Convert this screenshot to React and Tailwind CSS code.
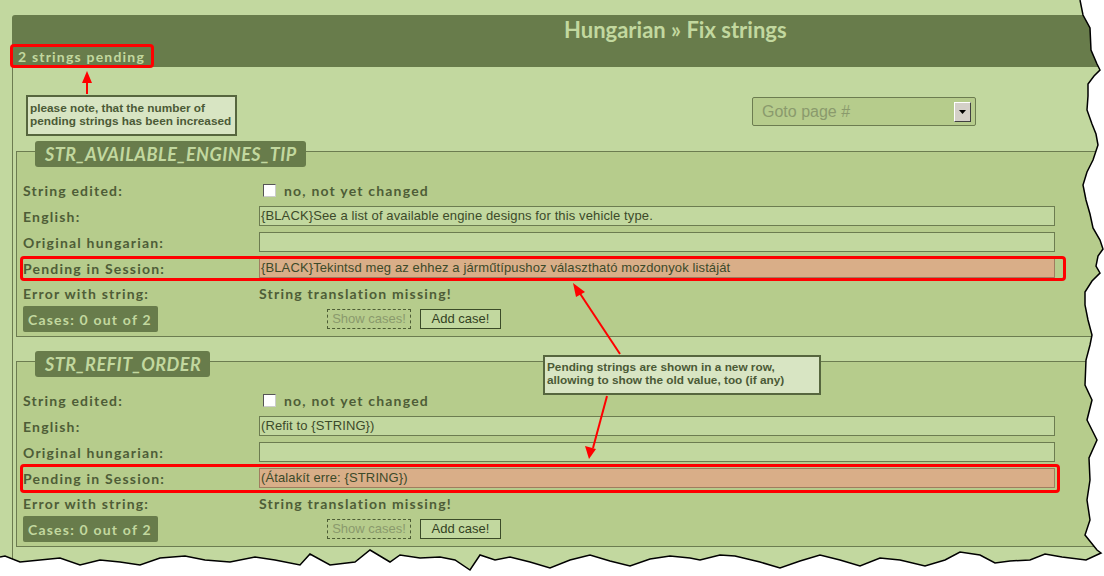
const EDGE = [
  [1080, 0], [1083, 15], [1090, 28], [1091, 50], [1097, 64], [1100, 70], [1094, 76], [1088, 84], [1088, 96],
  [1087, 110], [1092, 124], [1096, 134], [1098, 145], [1093, 160], [1087, 172], [1083, 185], [1086, 200],
  [1090, 214], [1093, 228], [1100, 240], [1103, 249], [1098, 256], [1096, 266], [1100, 273], [1092, 281],
  [1085, 292], [1085, 305], [1088, 320], [1092, 335], [1090, 345], [1086, 360], [1085, 385], [1092, 400],
  [1087, 420], [1097, 440], [1089, 458], [1090, 480], [1087, 500], [1090, 520], [1085, 535], [1097, 550],
  [1101, 553], [1086, 560], [1062, 557], [1045, 554], [1030, 560], [1010, 561], [995, 563], [980, 555],
  [960, 552], [945, 560], [925, 566], [900, 560], [880, 558], [860, 566], [840, 560], [820, 555], [800, 561],
  [780, 568], [760, 562], [735, 556], [720, 555], [700, 560], [690, 558], [670, 556], [650, 559], [630, 566],
  [610, 561], [590, 555], [570, 560], [550, 568], [530, 562], [510, 557], [495, 560], [480, 555], [470, 570],
  [455, 560], [440, 557], [420, 558], [400, 555], [390, 562], [370, 550], [355, 562], [330, 565], [310, 554],
  [300, 565], [275, 560], [255, 557], [230, 562], [205, 560], [185, 556], [160, 558], [140, 565], [120, 562],
  [100, 560], [80, 565], [60, 558], [40, 560], [20, 562], [5, 556], [0, 557],
];

const edgeLine = EDGE.map((p) => p.join(',')).join(' ');
const edgeFill = edgeLine + ' 0,576 1104,576 1104,0';

function Row({ label, children, h = 'h-[26px]' }) {
    return (
        <div className={`flex items-center ${h}`}>
            <div className="w-[236px] shrink-0 font-['Lato',sans-serif] font-bold text-[14px] tracking-[1.2px] text-[#4e5d37]">{label}</div>
            {children}
        </div>
    );
}

function Field({ value = '', pending = false }) {
    return (
        <div className={`w-[796px] h-[20px] border flex items-center px-[1px] font-['Liberation_Sans',Arial,sans-serif] text-[13px] tracking-[0.12px] text-[#3c4a2a] whitespace-nowrap ${pending ? 'bg-[#d9ae88] border-[#a07d5f]' : 'bg-[#c2d89f] border-[#6c7c50]'}`}>
            {value}
        </div>
    );
}

function StringBlock({ id, english, pending, frame }) {
    return (
        <div className="ml-[3px]">
            <div className="relative z-10 ml-[19px] inline-flex items-center h-[26px] pl-[10px] pr-[9px] bg-[#687c4b] rounded-[3px] font-['Lato',sans-serif] font-bold italic text-[18px] tracking-[0.5px] text-[#c2d89f]">
                {id}
            </div>
            <div className="-mt-[16px] border-l border-t border-b border-[#6c7c50] bg-[#b6cc8c] pt-[25px] pb-[4px] pl-[6px]">
                <Row label="String edited:">
                    <span className="ml-[4px] w-[13px] h-[13px] bg-white border border-t-[#555] border-l-[#555] border-r-[#ccc] border-b-[#ccc]" />
                    <span className="ml-[8px] font-['Lato',sans-serif] font-bold text-[14px] tracking-[1.2px] text-[#4e5d37]">no, not yet changed</span>
                </Row>
                <Row label="English:">
                    <Field value={english} />
                </Row>
                <Row label="Original hungarian:">
                    <Field />
                </Row>
                <div className="relative">
                    <Row label="Pending in Session:">
                        <Field value={pending} pending />
                    </Row>
                    <span className={`absolute left-[-3px] border-[3px] border-[#ff0000] rounded-[4px] ${frame}`} />
                </div>
                <Row label="Error with string:" h="h-[25px]">
                    <span className="font-['Lato',sans-serif] font-bold text-[14px] tracking-[1.2px] text-[#4e5d37]">String translation missing!</span>
                </Row>
                <div className="flex items-center h-[26px]">
                    <div className="w-[236px] shrink-0">
                        <div className="w-[135px] h-[26px] bg-[#687c4b] rounded-[2px] flex items-center pl-[5px] font-['Lato',sans-serif] font-bold text-[14px] tracking-[1.2px] text-[#c2d89f] whitespace-nowrap">
                            Cases: 0 out of 2
                        </div>
                    </div>
                    <div className="ml-[68px] w-[84px] h-[20px] border border-dashed border-[#4d5d35] flex items-center justify-center font-['Liberation_Sans',Arial,sans-serif] text-[13px] text-[#8a9a6c]">
                        Show cases!
                    </div>
                    <div className="ml-[9px] w-[81px] h-[20px] border border-[#3b4b28] bg-[#c2d89f] flex items-center justify-center font-['Liberation_Sans',Arial,sans-serif] text-[13px] text-[#33411f]">
                        Add case!
                    </div>
                </div>
            </div>
        </div>
    );
}

export default function App() {
    return (
        <div className="relative w-[1104px] h-[576px] overflow-hidden bg-[#c2d89f]">
            <div className="w-[1140px] pt-[15px]">
                <div className="ml-[12px] h-[52px] bg-[#687c4b] rounded-tl-[3px] flex flex-col">
                    <div className="pt-[2px] pl-[552px] font-['Lato',sans-serif] font-bold text-[22px] leading-[26px] text-[#c2d89f]">
                        Hungarian » Fix strings
                    </div>
                    <div className="mt-[1px] -ml-[2px] self-start h-[24px] border-[3px] border-[#ff0000] rounded-[4px] pl-[5px] pr-[6px] flex items-center font-['Lato',sans-serif] font-bold text-[14px] tracking-[1.2px] text-[#c2d89f] whitespace-nowrap">
                        2 strings pending
                    </div>
                </div>
                <div className="ml-[12px] border-l border-[#6c7c50] pb-[40px]">
                    <div className="h-[74px] flex items-start">
                        <div className="mt-[28px] ml-[13px] w-[211px] h-[41px] border-2 border-[#56663e] bg-[#d8e5c3] px-[2px] pt-[5px] font-['Liberation_Sans',Arial,sans-serif] font-bold text-[11.8px] leading-[13px] text-[#4b5a36] whitespace-nowrap">
                            please note, that the number of<br />pending strings has been increased
                        </div>
                        <div className="mt-[30px] ml-[515px] w-[224px] h-[29px] border border-[#6c7c50] rounded-[2px] bg-[#b6cc8c] flex items-center pl-[9px] pr-[4px] font-['Liberation_Sans',Arial,sans-serif] text-[16px] text-[#8a9a6c]">
                            <span className="flex-1">Goto page #</span>
                            <span className="w-[17px] h-[20px] bg-[#d4d0c8] border border-t-white border-l-white border-r-[#404040] border-b-[#404040] flex items-center justify-center">
                                <svg width="7" height="4" viewBox="0 0 7 4"><path d="M0 0h7L3.5 4z" fill="#000" /></svg>
                            </span>
                        </div>
                    </div>
                    <StringBlock
                        id="STR_AVAILABLE_ENGINES_TIP"
                        english="{BLACK}See a list of available engine designs for this vehicle type."
                        pending="{BLACK}Tekintsd meg az ehhez a járműtípushoz választható mozdonyok listáját"
                        frame="top-[1px] h-[25px] w-[1046px]"
                    />
                    <div className="h-[14px]" />
                    <StringBlock
                        id="STR_REFIT_ORDER"
                        english="(Refit to {STRING})"
                        pending="(Átalakít erre: {STRING})"
                        frame="-top-[1px] h-[29px] w-[1040px]"
                    />
                </div>
            </div>

            <div className="absolute left-[543px] top-[355px] w-[278px] h-[40px] border-2 border-[#56663e] bg-[#d8e5c3] px-[2px] pt-[4px] font-['Liberation_Sans',Arial,sans-serif] font-bold text-[11.8px] leading-[13px] text-[#4b5a36] whitespace-nowrap">
                Pending strings are shown in a new row,<br />allowing to show the old value, too (if any)
            </div>

            <svg className="absolute inset-0 pointer-events-none" width="1104" height="576" viewBox="0 0 1104 576">
                <g stroke="#ff0000" strokeWidth="2" fill="#ff0000">
                    <line x1="87" y1="94" x2="87" y2="80" />
                    <path d="M87 71 L92 83 L82 83 Z" stroke="none" />
                    <line x1="620" y1="354" x2="579" y2="292" />
                    <path d="M573 283 L585 292 L576 297 Z" stroke="none" />
                    <line x1="607" y1="396" x2="593" y2="448" />
                    <path d="M589 459 L585 446 L596 449 Z" stroke="none" />
                </g>
                <polygon points={edgeFill} fill="#ffffff" />
                <polyline points={edgeLine} fill="none" stroke="#000" strokeWidth="1.5" />
            </svg>
        </div>
    );
}
